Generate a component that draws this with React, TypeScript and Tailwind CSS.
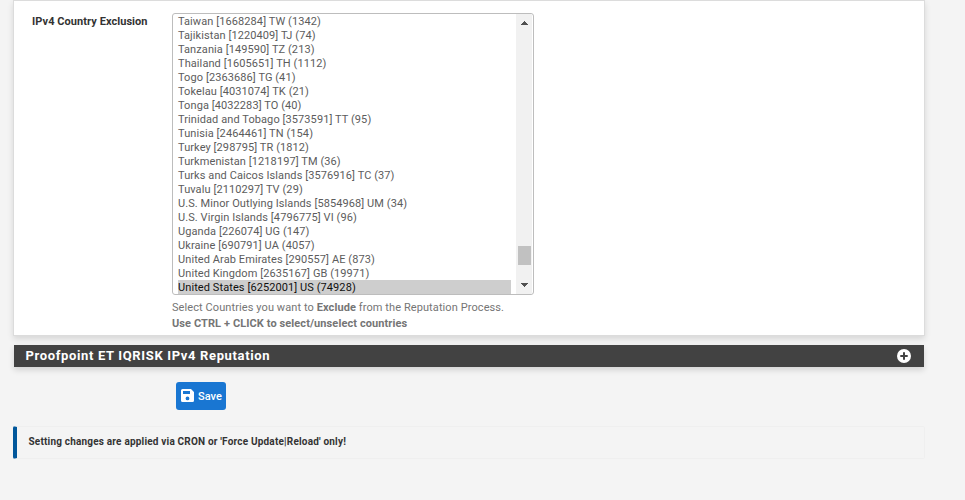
import React from "react";

const countries = [
  "Taiwan [1668284] TW (1342)",
  "Tajikistan [1220409] TJ (74)",
  "Tanzania [149590] TZ (213)",
  "Thailand [1605651] TH (1112)",
  "Togo [2363686] TG (41)",
  "Tokelau [4031074] TK (21)",
  "Tonga [4032283] TO (40)",
  "Trinidad and Tobago [3573591] TT (95)",
  "Tunisia [2464461] TN (154)",
  "Turkey [298795] TR (1812)",
  "Turkmenistan [1218197] TM (36)",
  "Turks and Caicos Islands [3576916] TC (37)",
  "Tuvalu [2110297] TV (29)",
  "U.S. Minor Outlying Islands [5854968] UM (34)",
  "U.S. Virgin Islands [4796775] VI (96)",
  "Uganda [226074] UG (147)",
  "Ukraine [690791] UA (4057)",
  "United Arab Emirates [290557] AE (873)",
  "United Kingdom [2635167] GB (19971)",
  "United States [6252001] US (74928)",
];

function Scrollbar() {
  return (
    <div className="flex w-[16px] flex-col items-center bg-[#f1f1f1]">
      <svg className="mt-[7px] h-[4px] w-[7px] shrink-0" viewBox="0 0 7 4" shapeRendering="crispEdges">
        <path d="M3 0h1v1h1v1h1v1h1v1H0V3h1V2h1V1h1z" fill="#505050" />
      </svg>
      <div className="mt-[221px] h-[19px] w-[13px] shrink-0 bg-[#c1c1c1]" />
      <svg className="mt-[18px] h-[4px] w-[7px] shrink-0" viewBox="0 0 7 4" shapeRendering="crispEdges">
        <path d="M0 0h7v1H6v1H5v1H4v1H3V3H2V2H1V1H0z" fill="#505050" />
      </svg>
    </div>
  );
}

function CountryList() {
  return (
    <div className="flex h-[282px] w-[362px] overflow-hidden rounded-[3px] border border-[#bdbdbd] bg-white">
      <ul className="w-[343px] pl-[5px] pr-[5px] text-[11px] leading-[16px] tracking-[0.085px] text-[#5c5c5c]">
        {countries.map((name, i) => (
          <li
            key={name}
            className={
              i === countries.length - 1
                ? "h-[14px] whitespace-nowrap bg-[#cecece] text-[#101010]"
                : "h-[14px] whitespace-nowrap"
            }
          >
            {name}
          </li>
        ))}
      </ul>
      <Scrollbar />
    </div>
  );
}

export default function App() {
  return (
    <main className="h-[500px] w-[965px] overflow-hidden bg-[#f4f4f4] pl-[13px] font-['Roboto',sans-serif]">
      <section className="flex h-[336px] w-[912px] border border-[#dcdcdc] bg-white pt-[12px] shadow-[0_3px_6px_rgba(0,0,0,0.12)]">
        <div className="w-[158px] pl-[18px] pt-[2px] text-[11px] font-bold leading-[14px] tracking-[0.06px] text-[#333]">
          <span className="whitespace-nowrap">IPv4 Country Exclusion</span>
        </div>
        <div>
          <CountryList />
          <div className="mt-[5px] text-[11px] leading-[16px] tracking-[0.09px] text-[#757575]">
            <p className="whitespace-nowrap">
              Select Countries you want to <b>Exclude</b> from the Reputation Process.
            </p>
            <p className="whitespace-nowrap font-bold">Use CTRL + CLICK to select/unselect countries</p>
          </div>
        </div>
      </section>

      <section className="ml-px mt-[9px] flex h-[22px] w-[910px] items-center justify-between bg-[#424242] pl-[11.5px] pr-[13.5px] text-white shadow-[0_3px_6px_rgba(0,0,0,0.14)]">
        <h2 className="text-[13px] font-bold leading-[22px] tracking-[0.65px]">Proofpoint ET IQRISK IPv4 Reputation</h2>
        <svg className="h-[14px] w-[14px]" viewBox="0 0 14 14">
          <circle cx="7" cy="7" r="7" fill="#fff" />
          <path d="M7 3.300v7.400M3.300 7h7.400" stroke="#424242" strokeWidth="2" />
        </svg>
      </section>

      <button
        type="button"
        className="ml-[163px] mt-[15px] flex h-[28px] w-[50px] items-center rounded-[3px] bg-[#1976d2] pl-[5px] text-[11px] font-medium text-white"
      >
        <svg className="mb-[1px] mr-[4px] h-[13px] w-[13px] shrink-0" viewBox="0 0 13 13">
          <path
            fillRule="evenodd"
            d="M1.500 0H10l3 3v8.500a1.500 1.500 0 0 1-1.500 1.500h-10A1.500 1.500 0 0 1 0 11.500v-10A1.500 1.500 0 0 1 1.500 0zM2 2v3h7V2zM6.500 7.500a1.900 1.900 0 1 0 0 3.800a1.900 1.900 0 0 0 0-3.800z"
            fill="#fff"
          />
        </svg>
        <span className="pt-[2px] leading-[14px]">Save</span>
      </button>

      <aside className="mt-[16px] flex h-[33px] w-[912px] items-center rounded-[2px] border border-l-4 border-[#efefef] border-l-[#01579b] pb-[2px] pl-[11.5px] text-[10px] font-bold tracking-[0.19px] text-[#333]">
        Setting changes are applied via CRON or 'Force Update|Reload' only!
      </aside>
    </main>
  );
}
